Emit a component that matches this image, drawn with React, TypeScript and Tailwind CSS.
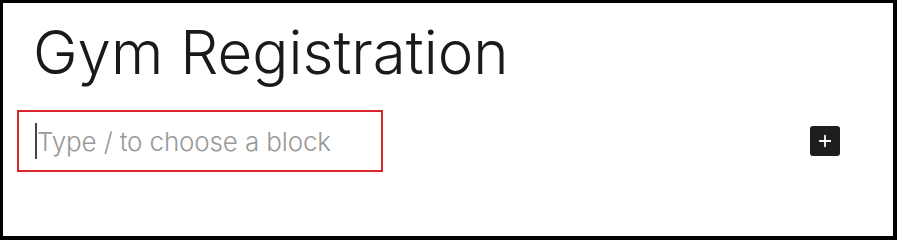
import { Plus } from "lucide-react";

export default function App() {
  return (
    <main className="w-[897px] h-[240px] bg-white border-t-[3px] border-l-[3px] border-r-[4px] border-b-[4px] border-black font-['Inter',sans-serif] overflow-hidden">
      <h1 className="pl-[30px] pt-[14px] text-[60px] leading-[70px] tracking-[0px] text-[#1a1a1a] font-light">
        Gym Registration
      </h1>

      <div className="flex items-center pl-[14px] pr-[53px] mt-[23px]">
        <div className="flex items-center w-[366px] h-[62px] border-2 border-[#d8262c] pl-[16px]">
          <span className="w-[2px] h-[36px] bg-[#444]" />
          <span className="text-[26px] tracking-[-0.15px] text-[#999] font-light">
            Type / to choose a block
          </span>
        </div>

        <button className="ml-auto w-[30px] h-[30px] rounded-[3px] bg-[#1e1e1e] flex items-center justify-center">
          <Plus className="w-[18px] h-[18px] text-white" strokeWidth={2.4} />
        </button>
      </div>
    </main>
  );
}
